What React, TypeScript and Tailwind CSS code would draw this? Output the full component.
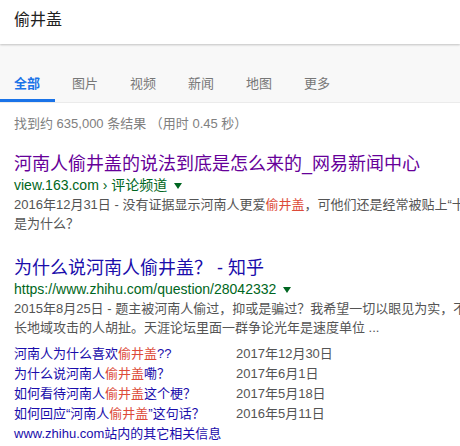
const FONT = "font-['Liberation_Sans','Noto_Sans_CJK_SC',sans-serif]";

const TABS = ['全部', '图片', '视频', '新闻', '地图', '更多'];

const SITELINKS: Array<{ pre: string; hit: string; post: string; date: string }> = [
  { pre: '河南人为什么喜欢', hit: '偷井盖', post: '??', date: '2017年12月30日' },
  { pre: '为什么说河南人', hit: '偷井盖', post: '嘞？', date: '2017年6月1日' },
  { pre: '如何看待河南人', hit: '偷井盖', post: '这个梗？', date: '2017年5月18日' },
  { pre: '如何回应“河南人', hit: '偷井盖', post: '”这句话？', date: '2016年5月11日' },
];

function Caret() {
  return (
    <svg width="8" height="6" viewBox="0 0 8 6" className="ml-[7px] inline-block align-middle">
      <path d="M0 0 L8 0 L4 6 Z" fill="#006621" />
    </svg>
  );
}

export default function App() {
  return (
    <div className={`h-[446px] w-[460px] overflow-hidden bg-white ${FONT}`}>
      <header className="relative z-10 flex h-[44px] items-center bg-white pb-[4px] pl-[14px] shadow-[0_1px_2px_rgba(0,0,0,0.22)]">
        <span className="text-[16px] text-[#222]">偷井盖</span>
      </header>

      <nav className="flex h-[59px] gap-[32px] border-b border-[#ebebeb] bg-[#f8f8f8] pl-[14px]">
        {TABS.map((tab, i) => (
          <div key={tab} className="relative pt-[27px]">
            <span
              className={
                i === 0
                  ? 'text-[13px] leading-[16px] font-bold text-[#1a73e8]'
                  : 'text-[13px] leading-[16px] text-[#777]'
              }
            >
              {tab}
            </span>
            {i === 0 && <div className="absolute bottom-0 left-[-14px] h-[3px] w-[55px] bg-[#1a73e8]" />}
          </div>
        ))}
      </nav>

      <main className="pl-[14px] whitespace-nowrap">
        <p className="mt-[11px] text-[13px] leading-[20px] text-[#808080]">找到约 635,000 条结果 （用时 0.45 秒）</p>

        <div className="mt-[19px]">
          <div className="text-[18px] leading-[22px] text-[#660099]">河南人偷井盖的说法到底是怎么来的_网易新闻中心</div>
          <div className="text-[14px] leading-[20px] text-[#006621]">
            view.163.com › 评论频道
            <Caret />
          </div>
          <div className="text-[13px] leading-[19px] text-[#545454]">
            2016年12月31日 - 没有证据显示河南人更爱<span className="text-[#dd4b39]">偷井盖</span>，可他们还是经常被贴上“十
          </div>
          <div className="text-[13px] leading-[19px] text-[#545454]">是为什么？</div>
        </div>

        <div className="mt-[24px]">
          <div className="text-[18px] leading-[22px] text-[#1a0dab]">为什么说河南人偷井盖？ - 知乎</div>
          <div className="text-[14px] leading-[20px] text-[#006621]">
            https://www.zhihu.com/question/28042332
            <Caret />
          </div>
          <div className="text-[13px] leading-[19px] text-[#545454]">
            2015年8月25日 - 题主被河南人偷过，抑或是骗过？我希望一切以眼见为实，不
          </div>
          <div className="text-[13px] leading-[19px] text-[#545454]">
            长地域攻击的人胡扯。天涯论坛里面一群争论光年是速度单位 ...
          </div>

          <div className="mt-[7px] text-[13px] leading-[20px]">
            {SITELINKS.map((link) => (
              <div key={link.date} className="grid grid-cols-[222px_1fr]">
                <span className="text-[#1a0dab]">
                  {link.pre}
                  <span className="text-[#dd4b39]">{link.hit}</span>
                  {link.post}
                </span>
                <span className="text-[#545454]">{link.date}</span>
              </div>
            ))}
            <div className="text-[#1a0dab]">www.zhihu.com站内的其它相关信息</div>
          </div>
        </div>
      </main>
    </div>
  );
}
